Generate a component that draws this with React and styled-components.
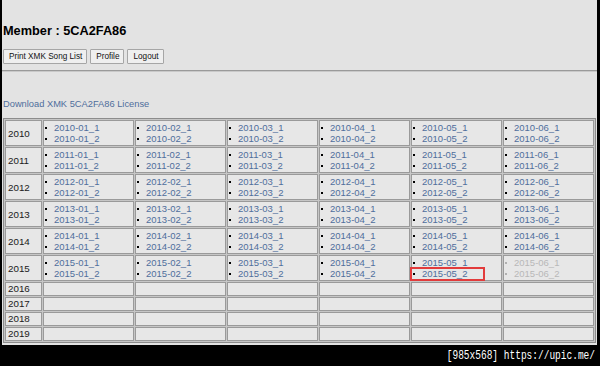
import styled, { createGlobalStyle } from "styled-components";

const GlobalStyle = createGlobalStyle`
  html, body {
    margin: 0;
    padding: 0;
    background: #000;
  }
`;

const Frame = styled.div`
  width: 600px;
  height: 366px;
  background: #000;
  display: flex;
  flex-direction: column;
  overflow: hidden;
`;

const Page = styled.div`
  margin: 0 3px 0 2px;
  height: 345px;
  background: #e3e3e3;
  padding: 23px 1px 0 1px;
  box-sizing: border-box;
  display: flex;
  flex-direction: column;
  font-family: Tahoma, "Liberation Sans", Arial, sans-serif;
  overflow: hidden;
`;

const Title = styled.h1`
  margin: 0;
  font-size: 12.75px;
  line-height: 15px;
  font-weight: bold;
  color: #000;
`;

const Toolbar = styled.div`
  display: flex;
  gap: 3px;
  margin-top: 11px;
`;

const Button = styled.button`
  height: 15px;
  padding: 0 4px 0 5px;
  font-family: Tahoma, "Liberation Sans", Arial, sans-serif;
  font-size: 8.2px;
  line-height: 13px;
  color: #111;
  background: #efefef;
  border: 1px solid #a6a6a6;
  border-radius: 1px;
`;

const Rule = styled.hr`
  margin: 6px -1px 0 -1px;
  height: 0;
  border: 0;
  border-top: 1px solid #9a9a9a;
  border-bottom: 1px solid #c9c9c9;
`;

const License = styled.a`
  margin-top: 27px;
  font-size: 9.3px;
  line-height: 11px;
  color: #4f6e9c;
  text-decoration: none;
`;

const Grid = styled.table`
  margin-top: 8px;
  width: 100%;
  table-layout: fixed;
  border-collapse: separate;
  border-spacing: 1px;
  background: #c6c6c6;
  border: 1px solid #8c8c8c;
`;

const YearCell = styled.td`
  width: 31px;
  padding: 0 2px;
  border: 1px solid #9a9a9a;
  background: #e7e7e7;
  font-size: 9.8px;
  color: #1a1a1a;
  line-height: ${(p) => (p.$empty ? "10px" : "11px")};
  height: ${(p) => (p.$empty ? "10px" : "auto")};
  vertical-align: middle;
`;

const MonthCell = styled.td`
  padding: ${(p) => (p.$empty ? "0 1px" : "1px")};
  border: 1px solid #9a9a9a;
  background: #e7e7e7;
  height: ${(p) => (p.$empty ? "12px" : "auto")};
  vertical-align: top;
`;

const Files = styled.ul`
  margin: 0;
  padding: 0;
  list-style: none;
`;

const File = styled.li`
  position: relative;
  display: flex;
  align-items: center;
  font-size: 9.5px;
  line-height: 11px;
  color: ${(p) => (p.$off ? "#b8b8b8" : "#4f6e9c")};

  &::before {
    content: "";
    width: 2px;
    height: 2px;
    margin-right: 7px;
    background: ${(p) => (p.$off ? "#b0b0b0" : "#000")};
  }
`;

const Marked = styled.span`
  position: absolute;
  left: -3px;
  top: -1px;
  width: 71px;
  height: 10px;
  border: 2px solid #e23b3b;
  pointer-events: none;
`;

const Footer = styled.div`
  flex: 1;
  display: flex;
  align-items: center;
  justify-content: flex-end;
  padding-right: 5px;
  color: #fff;
  font-family: "Liberation Mono", "DejaVu Sans Mono", monospace;
  font-size: 9.5px;

  span {
    display: inline-block;
    transform: scaleY(1.25);
  }
`;

const years = [2010, 2011, 2012, 2013, 2014, 2015, 2016, 2017, 2018, 2019];
const months = ["01", "02", "03", "04", "05", "06"];

function Month({ year, month }) {
  const off = year === 2015 && month === "06";
  return (
    <MonthCell>
      <Files>
        <File $off={off}>{`${year}-${month}_1`}</File>
        <File $off={off}>
          {`${year}-${month}_2`}
          {year === 2015 && month === "05" && <Marked />}
        </File>
      </Files>
    </MonthCell>
  );
}

export default function App() {
  return (
    <>
      <GlobalStyle />
      <Frame>
        <Page>
          <Title>Member : 5CA2FA86</Title>
          <Toolbar>
            <Button>Print XMK Song List</Button>
            <Button>Profile</Button>
            <Button>Logout</Button>
          </Toolbar>
          <Rule />
          <License href="#">Download XMK 5CA2FA86 License</License>
          <Grid>
            <tbody>
              {years.map((year) => {
                const empty = year > 2015;
                return (
                  <tr key={year}>
                    <YearCell $empty={empty}>{year}</YearCell>
                    {months.map((m) =>
                      empty ? (
                        <MonthCell key={m} $empty />
                      ) : (
                        <Month key={m} year={year} month={m} />
                      )
                    )}
                  </tr>
                );
              })}
            </tbody>
          </Grid>
        </Page>
        <Footer>
          <span>[985x568] https://upic.me/</span>
        </Footer>
      </Frame>
    </>
  );
}
